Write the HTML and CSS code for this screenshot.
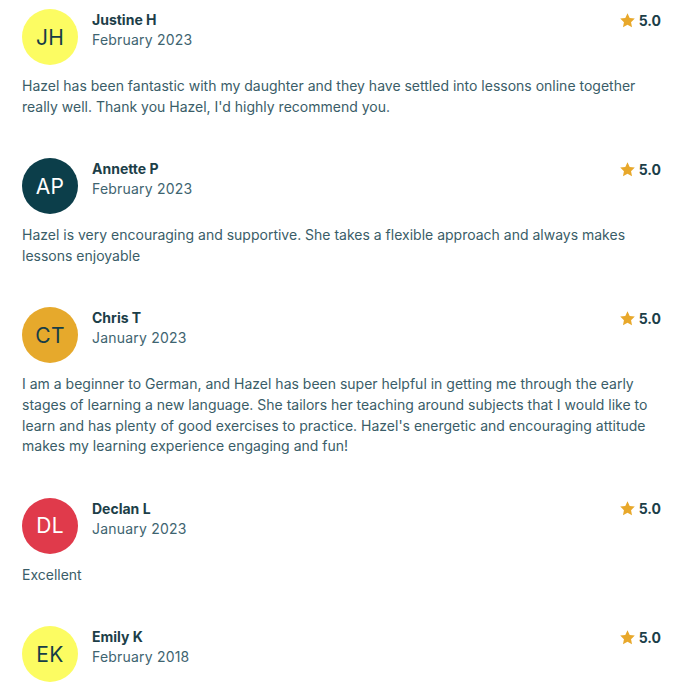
FILE: index.html
```html
<!DOCTYPE html>
<html lang="en">
<head>
<meta charset="utf-8">
<title>Reviews</title>
<link rel="stylesheet" href="styles.css">
</head>
<body>
<div class="reviews">
  <div class="review">
    <div class="head">
      <div class="avatar yellow">JH</div>
      <div class="info">
        <div class="name">Justine H</div>
        <div class="date">February 2023</div>
      </div>
      <div class="rating"><svg class="star" viewBox="0 0 24 24"><path d="M12 1.8l3.1 6.6 7.2.9-5.3 5 1.4 7.1L12 17.9l-6.4 3.5L7 14.3l-5.3-5 7.2-.9z"/></svg><span>5.0</span></div>
    </div>
    <p class="text">Hazel has been fantastic with my daughter and they have settled into lessons online together really well. Thank you Hazel, I'd highly recommend you.</p>
  </div>
  <div class="review">
    <div class="head">
      <div class="avatar teal">AP</div>
      <div class="info">
        <div class="name">Annette P</div>
        <div class="date">February 2023</div>
      </div>
      <div class="rating"><svg class="star" viewBox="0 0 24 24"><path d="M12 1.8l3.1 6.6 7.2.9-5.3 5 1.4 7.1L12 17.9l-6.4 3.5L7 14.3l-5.3-5 7.2-.9z"/></svg><span>5.0</span></div>
    </div>
    <p class="text">Hazel is very encouraging and supportive. She takes a flexible approach and always makes lessons enjoyable</p>
  </div>
  <div class="review">
    <div class="head">
      <div class="avatar gold">CT</div>
      <div class="info">
        <div class="name">Chris T</div>
        <div class="date">January 2023</div>
      </div>
      <div class="rating"><svg class="star" viewBox="0 0 24 24"><path d="M12 1.8l3.1 6.6 7.2.9-5.3 5 1.4 7.1L12 17.9l-6.4 3.5L7 14.3l-5.3-5 7.2-.9z"/></svg><span>5.0</span></div>
    </div>
    <p class="text">I am a beginner to German, and Hazel has been super helpful in getting me through the early stages of learning a new language. She tailors her teaching around subjects that I would like to learn and has plenty of good exercises to practice. Hazel's energetic and encouraging attitude makes my learning experience engaging and fun!</p>
  </div>
  <div class="review">
    <div class="head">
      <div class="avatar red">DL</div>
      <div class="info">
        <div class="name">Declan L</div>
        <div class="date">January 2023</div>
      </div>
      <div class="rating"><svg class="star" viewBox="0 0 24 24"><path d="M12 1.8l3.1 6.6 7.2.9-5.3 5 1.4 7.1L12 17.9l-6.4 3.5L7 14.3l-5.3-5 7.2-.9z"/></svg><span>5.0</span></div>
    </div>
    <p class="text">Excellent</p>
  </div>
  <div class="review">
    <div class="head">
      <div class="avatar yellow">EK</div>
      <div class="info">
        <div class="name">Emily K</div>
        <div class="date">February 2018</div>
      </div>
      <div class="rating"><svg class="star" viewBox="0 0 24 24"><path d="M12 1.8l3.1 6.6 7.2.9-5.3 5 1.4 7.1L12 17.9l-6.4 3.5L7 14.3l-5.3-5 7.2-.9z"/></svg><span>5.0</span></div>
    </div>
  </div>
</div>
</body>
</html>
```
FILE: styles.css
```css
html, body {
  margin: 0;
  padding: 0;
  background: #ffffff;
}
body {
  font-family: Inter, "Noto Sans", sans-serif;
  color: #3a5d68;
  overflow: hidden;
  height: 692px;
}
.reviews {
  padding: 9px 27px 0 22px;
}
.review {
  padding-bottom: 41px;
}
.head {
  display: flex;
  align-items: flex-start;
}
.avatar {
  width: 56px;
  height: 56px;
  border-radius: 50%;
  flex: none;
  display: flex;
  align-items: center;
  justify-content: center;
  font-size: 21px;
  color: #163d47;
  letter-spacing: 0.3px;
}
.yellow { background: #fcfc62; }
.teal { background: #0c3e4a; color: #ffffff; }
.gold { background: #e6a92c; }
.red { background: #e03a4b; color: #ffffff; }
.info {
  margin-left: 14px;
  padding-top: 1px;
  flex: 1;
}
.name {
  font-size: 14px;
  font-weight: 700;
  line-height: 20px;
  color: #1c3e48;
}
.date {
  font-size: 14px;
  line-height: 20px;
  color: #3e6470;
  letter-spacing: 0.2px;
}
.rating {
  display: flex;
  align-items: center;
  padding-top: 1px;
  height: 20px;
  font-size: 14px;
  font-weight: 700;
  color: #1c3e48;
}
.star {
  width: 17px;
  height: 17px;
  fill: #e8a82b;
  margin-right: 3px;
}
.text {
  margin: 11px 0 0;
  font-size: 14px;
  line-height: 20.6px;
}
```
